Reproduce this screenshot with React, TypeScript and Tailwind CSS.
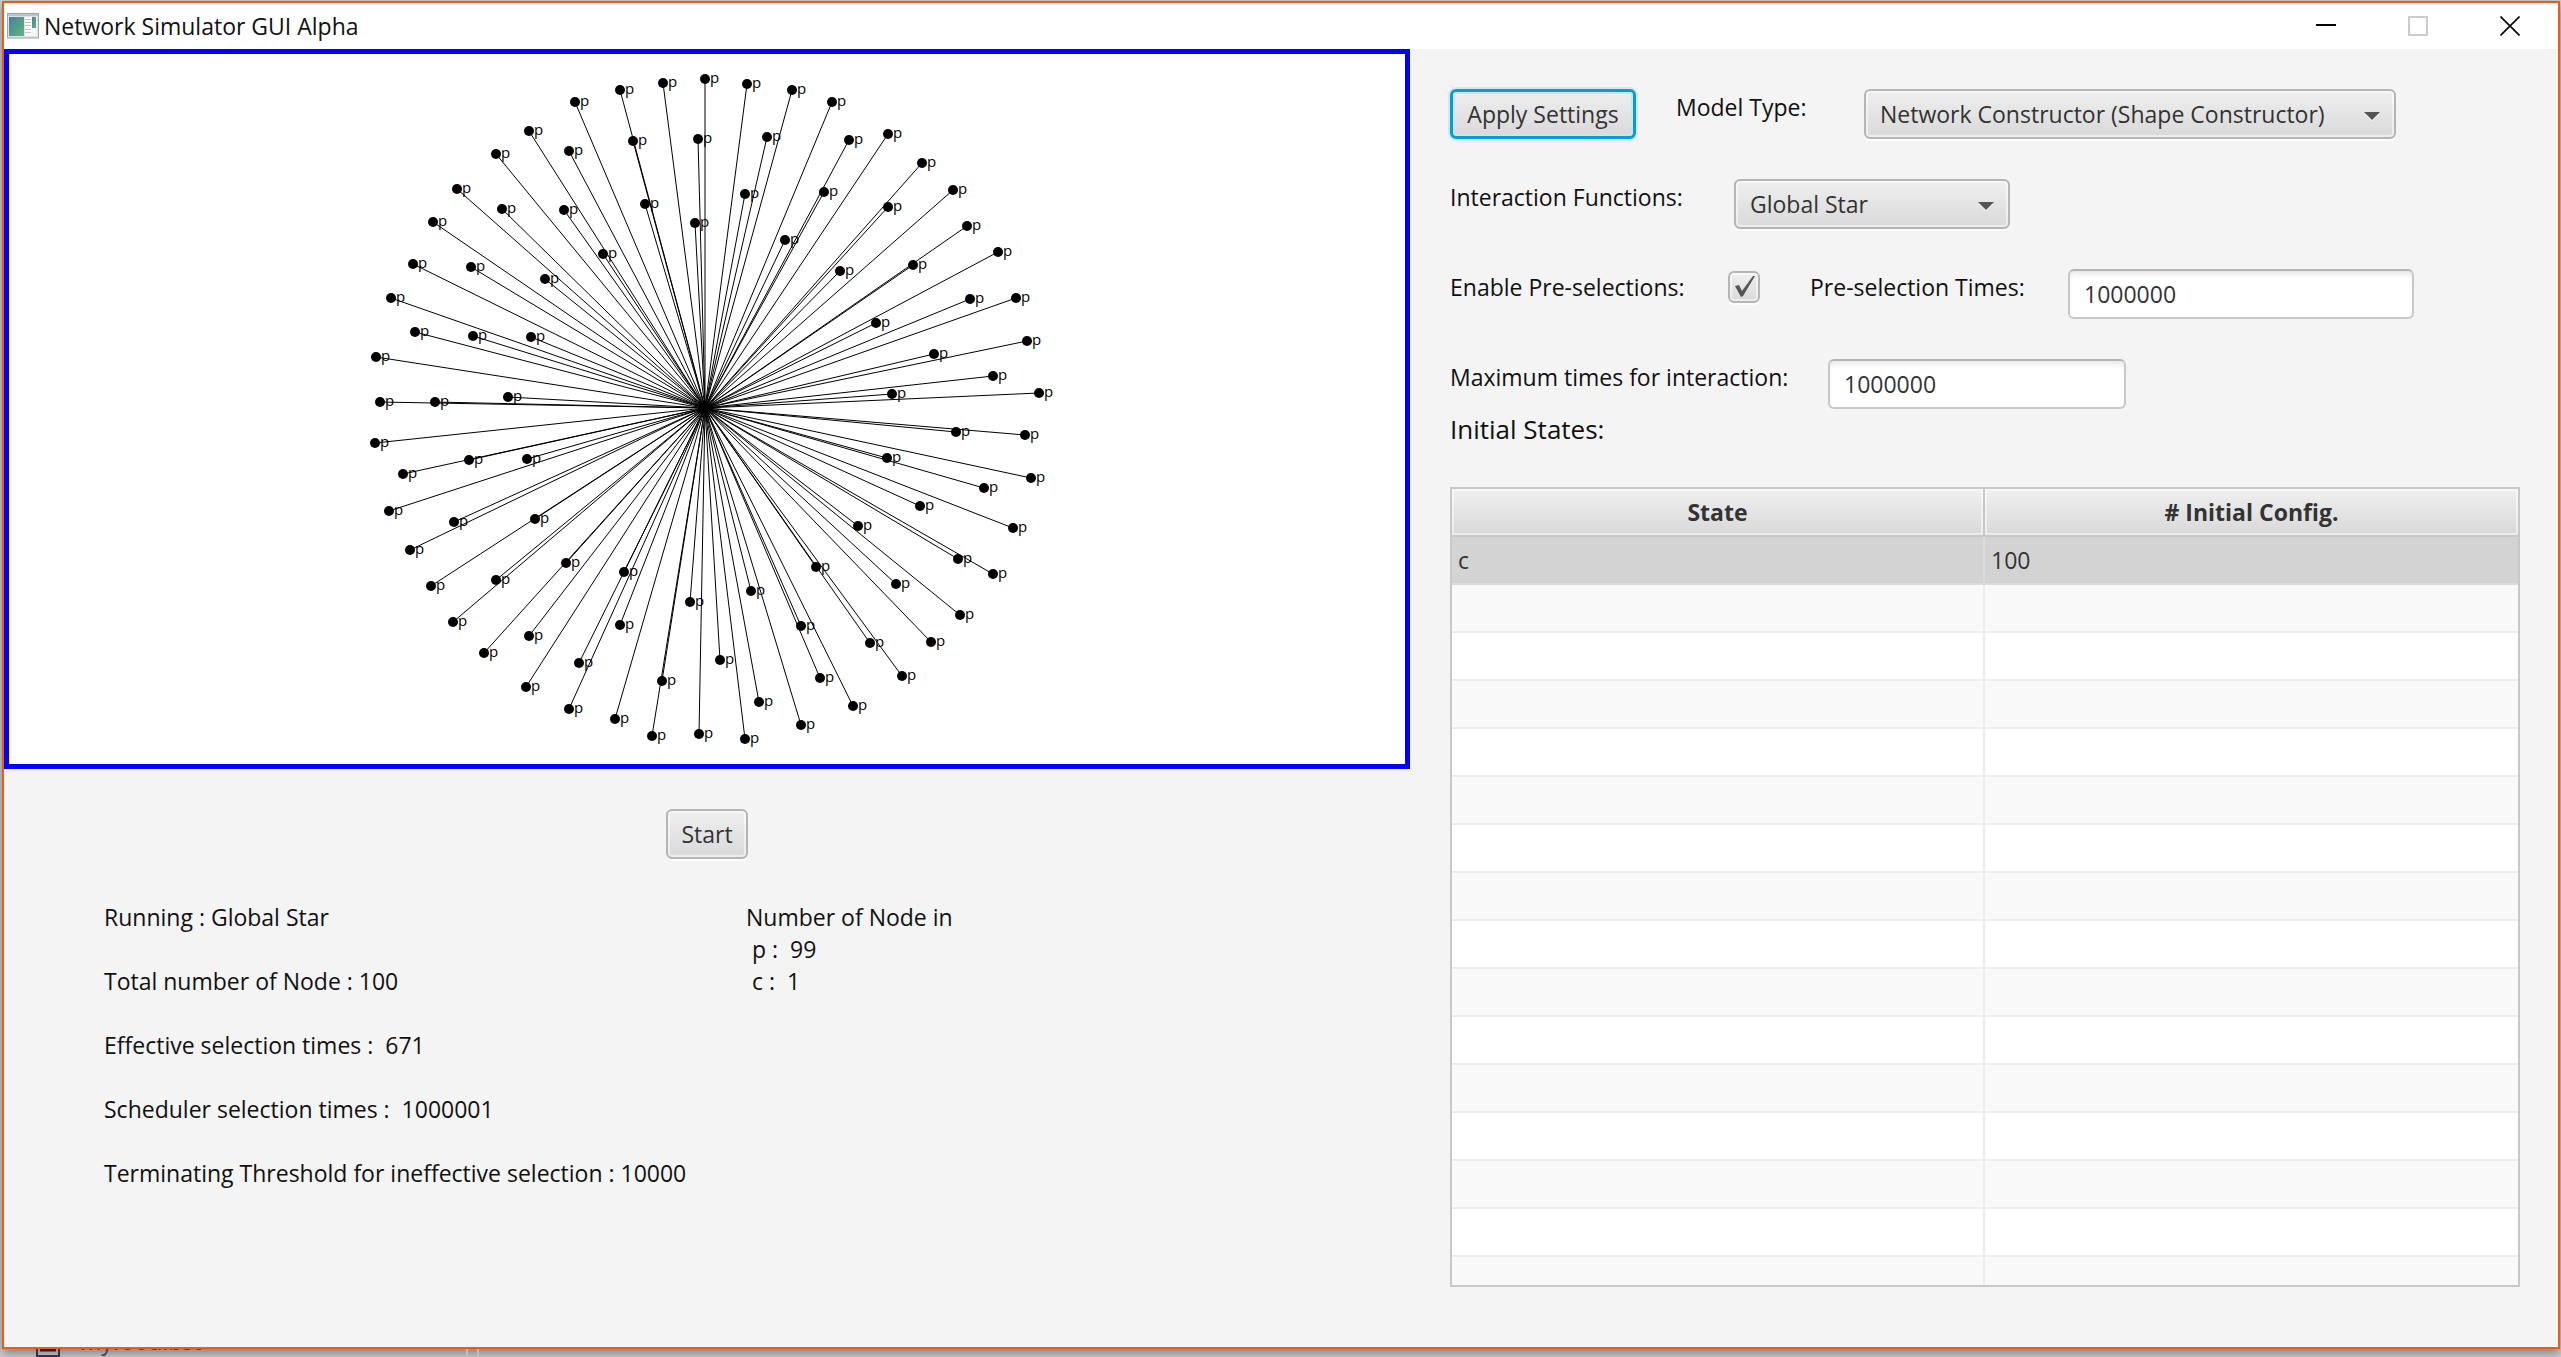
const NODES: [number, number][] = [
  [663, 83], [620, 90], [575, 102], [529, 131], [496, 154], [633, 141], [569, 151], [457, 189], [502, 209], [564, 210],
  [645, 204], [695, 223], [698, 139], [433, 222], [603, 254], [413, 264], [471, 267], [545, 279], [391, 298], [415, 332],
  [473, 336], [531, 337], [376, 357], [705, 79], [747, 84], [792, 90], [832, 102], [767, 137], [849, 140], [888, 134],
  [922, 163], [745, 194], [824, 192], [888, 207], [953, 190], [967, 226], [785, 240], [840, 271], [913, 265], [998, 252],
  [970, 299], [1016, 298], [876, 323], [934, 354], [1027, 341], [993, 376], [892, 394], [1039, 393], [380, 402], [435, 402],
  [508, 397], [375, 443], [469, 460], [527, 459], [403, 474], [389, 511], [454, 522], [535, 519], [410, 550], [431, 586],
  [496, 580], [566, 563], [624, 572], [453, 622], [529, 636], [484, 653], [579, 663], [620, 625], [690, 602], [526, 687],
  [569, 709], [662, 681], [615, 719], [652, 736], [699, 734], [956, 432], [1025, 435], [887, 458], [1031, 478], [984, 488],
  [920, 506], [858, 526], [1013, 528], [958, 559], [993, 574], [816, 567], [896, 584], [751, 591], [801, 626], [870, 643],
  [960, 615], [931, 642], [720, 660], [902, 676], [820, 678], [759, 702], [853, 706], [801, 725], [745, 739],
];
const HUB: [number, number] = [705, 408];

const BUTTON =
  "h-[50px] rounded-[6px] border-2 border-[#b5b5b5] bg-linear-to-b from-[#efefef] to-[#d9d9d9] text-[#333] shadow-[inset_0_0_0_2px_rgba(255,255,255,0.5),0_2px_0_#fcfcfc]";
const INPUT =
  "h-[50px] rounded-[6px] border-2 border-[#c8c8c8] border-t-[#b5b5b5] bg-white px-[14px] text-[#333] outline-none shadow-[inset_0_6px_6px_-4px_rgba(0,0,0,0.12)]";
const LABEL = "pt-[2px] whitespace-nowrap";
const HEAD_CELL =
  "border-b-2 border-[#c8c8c8] bg-linear-to-b from-[#efefef] to-[#d9d9d9] p-0 font-bold shadow-[inset_0_0_0_2px_rgba(255,255,255,0.5)]";

function Graph() {
  return (
    <svg viewBox="9 54 1396 710" className="block w-full" role="img" aria-label="Global star network">
      <g stroke="#000" strokeWidth="1">
        {NODES.map(([x, y]) => (
          <line key={`${x}-${y}`} x1={HUB[0]} y1={HUB[1]} x2={x} y2={y} />
        ))}
      </g>
      {NODES.map(([x, y]) => (
        <g key={`${x}-${y}`}>
          <circle cx={x} cy={y} r="5" />
          <text x={x + 5} y={y + 4} fontSize="15" fill="#000">
            p
          </text>
        </g>
      ))}
      <circle cx={HUB[0]} cy={HUB[1]} r="6" />
      <text x={HUB[0] + 5} y={HUB[1] + 4} fontSize="15" fill="#000">
        c
      </text>
    </svg>
  );
}

function Dropdown({ id, value, width }: { id: string; value: string; width: string }) {
  return (
    <div className={`relative ${width}`}>
      <select id={id} className={`${BUTTON} w-full appearance-none pr-12 pl-[14px]`}>
        <option>{value}</option>
      </select>
      <svg viewBox="0 0 16 10" className="pointer-events-none absolute top-[22px] right-4 h-[10px] w-4">
        <path d="M1 3h14L8 10z" fill="#fff" />
        <path d="M0 1h16L8 9z" fill="#555" />
      </svg>
    </div>
  );
}

function TitleBar() {
  return (
    <header className="flex h-[46px] shrink-0 items-center bg-white pr-[2px] pl-[3px]">
      <svg viewBox="0 0 32 26" className="h-[26px] w-8">
        <defs>
          <linearGradient id="pane" x1="0" y1="0" x2="1" y2="1">
            <stop offset="0" stopColor="#4a7f9f" />
            <stop offset="1" stopColor="#5cb878" />
          </linearGradient>
        </defs>
        <rect x="0.5" y="0.5" width="31" height="24.500" fill="#dfe2e8" stroke="#9da5b1" />
        <rect x="1" y="1" width="30" height="2" fill="#bcc4d0" />
        <rect x="2" y="4" width="15" height="19" fill="url(#pane)" />
        <rect x="18" y="4" width="7" height="19" fill="#fafafa" />
        <path d="M18 6.500h6M18 9.500h6M18 12.500h6M18 16.500h6M18 19.500h6" stroke="#c4c4c4" />
        <rect x="25" y="4" width="5" height="19" fill="#f4f5f7" />
        <rect x="25" y="4" width="4" height="11" fill="url(#pane)" />
      </svg>
      <h1 className="ml-[5px] flex-1 text-[23px] leading-8">Network Simulator GUI Alpha</h1>
      <div className="flex">
        <button aria-label="Minimize" className="flex h-[46px] w-[92px] items-center justify-center">
          <svg viewBox="0 0 20 20" className="size-5"><path d="M0 9h20" stroke="#000" strokeWidth="2" /></svg>
        </button>
        <button aria-label="Maximize" disabled className="flex h-[46px] w-[92px] items-center justify-center">
          <svg viewBox="0 0 20 20" className="size-5"><path d="M1 1h18v18H1z" fill="none" stroke="#ccc" strokeWidth="2" /></svg>
        </button>
        <button aria-label="Close" className="flex h-[46px] w-[92px] items-center justify-center">
          <svg viewBox="0 0 20 20" className="size-5"><path d="M0.500 0.500l19 19M19.500 0.500l-19 19" stroke="#000" strokeWidth="1.600" /></svg>
        </button>
      </div>
    </header>
  );
}

export default function App() {
  return (
    <div className="flex h-screen flex-col overflow-hidden bg-[#cfcfcf] pt-px pr-px pl-[2px] font-['Open_Sans','Noto_Sans',sans-serif] text-[23px] leading-8 text-[#111]">
      <div className="flex min-h-0 flex-1 flex-col border-2 border-[#f05a14] bg-[#f4f4f4] shadow-[0_4px_10px_rgba(0,0,0,0.4)]">
        <TitleBar />
        <main className="grid min-h-0 flex-1 grid-cols-[1406fr_1148fr]">
          <section className="flex flex-col">
            <div className="border-[5px] border-[#0000ff] bg-white">
              <Graph />
            </div>
            <button className={`${BUTTON} mt-10 w-[82px] self-center`}>Start</button>
            <div className="mt-[42px] grid grid-cols-[642fr_664fr] pl-[100px]">
              <div className="flex flex-col gap-8 whitespace-pre">
                <p>Running : Global Star</p>
                <p>Total number of Node : 100</p>
                <p>Effective selection times :  671</p>
                <p>Scheduler selection times :  1000001</p>
                <p>Terminating Threshold for ineffective selection : 10000</p>
              </div>
              <div className="whitespace-pre">
                <p>Number of Node in</p>
                <p> p :  99</p>
                <p> c :  1</p>
              </div>
            </div>
          </section>

          <section className="flex min-h-0 flex-col pt-10 pr-[38px] pb-[60px] pl-10">
            <form className="flex flex-col gap-10" onSubmit={(e) => e.preventDefault()}>
              <div className="flex items-start gap-10">
                <button className="h-[50px] w-[186px] rounded-[6px] border-[3px] border-[#039ed3] bg-linear-to-b from-[#efefef] to-[#d9d9d9] text-[#333] shadow-[inset_0_0_0_2px_#cfe3ea,0_0_0_2px_#d3e8ef]">
                  Apply Settings
                </button>
                <label htmlFor="model" className={`${LABEL} w-[148px]`}>Model Type:</label>
                <Dropdown id="model" value="Network Constructor (Shape Constructor)" width="w-[532px]" />
              </div>
              <div className="flex items-start gap-10">
                <label htmlFor="functions" className={`${LABEL} w-[244px]`}>Interaction Functions:</label>
                <Dropdown id="functions" value="Global Star" width="w-[276px]" />
              </div>
              <div className="flex items-start gap-10">
                <label htmlFor="preselect" className={`${LABEL} w-[238px]`}>Enable Pre-selections:</label>
                <div className="relative flex h-[50px] w-[42px]">
                  <input
                    id="preselect"
                    type="checkbox"
                    defaultChecked
                    className="mt-[2px] size-8 appearance-none rounded-[6px] border-2 border-[#b5b5b5] bg-linear-to-b from-[#efefef] to-[#d9d9d9] shadow-[inset_0_0_0_2px_rgba(255,255,255,0.5),0_2px_0_#fcfcfc]"
                  />
                  <svg viewBox="0 0 32 32" className="pointer-events-none absolute top-[2px] left-0 size-8">
                    <path d="M7 15l4-1 3 6L25 5h2L15 25l-2 1z" fill="#555" />
                  </svg>
                </div>
                <label htmlFor="times" className={`${LABEL} w-[218px]`}>Pre-selection Times:</label>
                <input id="times" defaultValue="1000000" className={`${INPUT} w-[346px]`} />
              </div>
              <div className="flex items-start gap-10">
                <label htmlFor="maximum" className={`${LABEL} w-[338px]`}>Maximum times for interaction:</label>
                <input id="maximum" defaultValue="1000000" className={`${INPUT} w-[298px]`} />
              </div>
            </form>
            <h2 className="text-[26px] leading-10">Initial States:</h2>
            <div className="mt-[38px] min-h-0 flex-1 overflow-hidden border-2 border-[#c8c8c8]">
              <table className="w-full table-fixed border-separate border-spacing-0 text-[#333]">
                <colgroup>
                  <col className="w-[calc(50%+1px)]" />
                  <col />
                </colgroup>
                <thead>
                  <tr className="h-12">
                    <th className={`${HEAD_CELL} border-r-2`}>State</th>
                    <th className={HEAD_CELL}># Initial Config.</th>
                  </tr>
                </thead>
                <tbody>
                  <tr className="h-12 bg-[#d3d3d3]">
                    <td className="border-r-2 border-b-2 border-[#dcdcdc] px-[6px] py-0">c</td>
                    <td className="border-b-2 border-[#dcdcdc] px-[6px] py-0">100</td>
                  </tr>
                  {Array.from({ length: 15 }, (_, i) => (
                    <tr key={i} className="h-12 odd:bg-white even:bg-[#f9f9f9]">
                      <td className="border-r-2 border-b-2 border-[#ededed] p-0" />
                      <td className="border-b-2 border-[#ededed] p-0" />
                    </tr>
                  ))}
                </tbody>
              </table>
            </div>
          </section>
        </main>
      </div>
      {/* Sliver of the file list behind the window */}
      <footer className="flex h-2 shrink-0 items-end overflow-hidden pl-[34px] text-[#444]">
        <svg viewBox="0 0 24 24" className="size-6 shrink-0">
          <path d="M1 1h22v22H1z" fill="none" stroke="#334" strokeWidth="2" />
          <path d="M4 17h16" stroke="#223" strokeWidth="3" />
        </svg>
        <span className="ml-5 w-[386px] shrink-0">myfood.bst</span>
        <span className="h-2 w-[13px] border-x-2 border-[#bdbdbd]" />
      </footer>
    </div>
  );
}
